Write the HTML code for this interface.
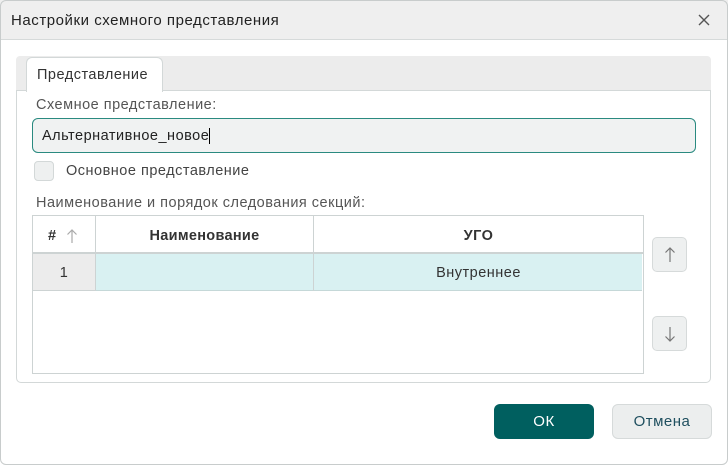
<!DOCTYPE html>
<html><head><meta charset="utf-8"><style>
*{box-sizing:border-box;margin:0;padding:0}
body{width:728px;height:465px;background:#fff;font-family:"Liberation Sans",sans-serif;font-size:14.5px;letter-spacing:0.5px;color:#333;position:relative;overflow:hidden;line-height:1.45}
.frame{position:absolute;left:0;top:0;width:728px;height:465px;border:1px solid #c8cccc;border-radius:6px;z-index:5;pointer-events:none}
.title{position:absolute;left:0;top:0;width:728px;height:40px;background:#efefef;border-bottom:1px solid #d6dada}
.abs{position:absolute}
</style></head><body>
<div class="frame"></div>
<div class="title"></div>
<div class="abs" style="left:11px;top:10px;font-size:15px;color:#222;letter-spacing:0.55px">Настройки схемного представления</div>
<svg class="abs" style="left:697px;top:13px" width="14" height="14"><path d="M2 2L12 12M12 2L2 12" stroke="#555" stroke-width="1.4"/></svg>
<div class="abs" style="left:16px;top:56px;width:695px;height:35px;background:#ececec;border-radius:4px 4px 0 0"></div>
<div class="abs" style="left:16px;top:90px;width:695px;height:293px;border:1px solid #d3d8d8;border-radius:0 0 5px 5px;background:#fff"></div>
<div class="abs" style="left:26px;top:57px;width:137px;height:35px;background:#fff;border:1px solid #d3d8d8;border-bottom:none;border-radius:6px 6px 0 0"></div>
<div class="abs" style="left:37px;top:65px;color:#333">Представление</div>
<div class="abs" style="left:36px;top:95px;color:#555">Схемное представление:</div>
<div class="abs" style="left:32px;top:118px;width:664px;height:35px;border:1px solid #2a8a80;border-radius:6px;background:#f0f2f2"></div>
<div class="abs" style="left:42px;top:126px;color:#222">Альтернативное_новое<span style="border-left:1px solid #000"></span></div>
<div class="abs" style="left:34px;top:161px;width:20px;height:20px;border:1px solid #d3d8d8;border-radius:4px;background:#eef0f0"></div>
<div class="abs" style="left:66px;top:161px;color:#444">Основное представление</div>
<div class="abs" style="left:36px;top:193px;color:#555">Наименование и порядок следования секций:</div>
<div class="abs" style="left:32px;top:215px;width:612px;height:159px;border:1px solid #cdd3d3;background:#fff"></div>
<div class="abs" style="left:33px;top:252px;width:610px;height:2px;background:#cdd3d3"></div>
<div class="abs" style="left:33px;top:254px;width:62px;height:37px;background:#ececec"></div>
<div class="abs" style="left:96px;top:254px;width:546px;height:37px;background:#d9f1f2;border-bottom:1px solid #c5d8d8"></div>
<div class="abs" style="left:33px;top:290px;width:62px;height:1px;background:#cdd3d3"></div>
<div class="abs" style="left:95px;top:216px;width:1px;height:75px;background:#cdd3d3"></div>
<div class="abs" style="left:313px;top:216px;width:1px;height:75px;background:#cdd3d3"></div>
<div class="abs" style="left:48px;top:226px;font-weight:bold;color:#333">#</div>
<svg class="abs" style="left:66px;top:228px" width="12" height="16"><path d="M6 2V15M1.5 6.5L6 2L10.5 6.5" stroke="#aaa" fill="none" stroke-width="1.2"/></svg>
<div class="abs" style="left:96px;top:226px;width:217px;text-align:center;font-weight:bold;color:#333;letter-spacing:0.3px">Наименование</div>
<div class="abs" style="left:314px;top:226px;width:329px;text-align:center;font-weight:bold;color:#333">УГО</div>
<div class="abs" style="left:33px;top:263px;width:62px;text-align:center;color:#333">1</div>
<div class="abs" style="left:314px;top:263px;width:329px;text-align:center;color:#333">Внутреннее</div>
<div class="abs" style="left:652px;top:237px;width:35px;height:35px;border:1px solid #d6dada;border-radius:5px;background:#eef0f0"></div>
<svg class="abs" style="left:664px;top:247px" width="12" height="16"><path d="M6 1V15M1.5 5.5L6 1L10.5 5.5" stroke="#777" fill="none" stroke-width="1.2"/></svg>
<div class="abs" style="left:652px;top:316px;width:35px;height:35px;border:1px solid #d6dada;border-radius:5px;background:#eef0f0"></div>
<svg class="abs" style="left:664px;top:326px" width="12" height="16"><path d="M6 1V15M1.5 10.5L6 15L10.5 10.5" stroke="#777" fill="none" stroke-width="1.2"/></svg>
<div class="abs" style="left:494px;top:404px;width:100px;height:35px;border-radius:6px;background:#005f5f;color:#fff;text-align:center;line-height:36px;font-size:15px">ОК</div>
<div class="abs" style="left:612px;top:404px;width:100px;height:35px;border-radius:6px;background:#eceeee;border:1px solid #d6dada;color:#1f4f5f;text-align:center;line-height:34px;font-size:15px">Отмена</div>
</body></html>
